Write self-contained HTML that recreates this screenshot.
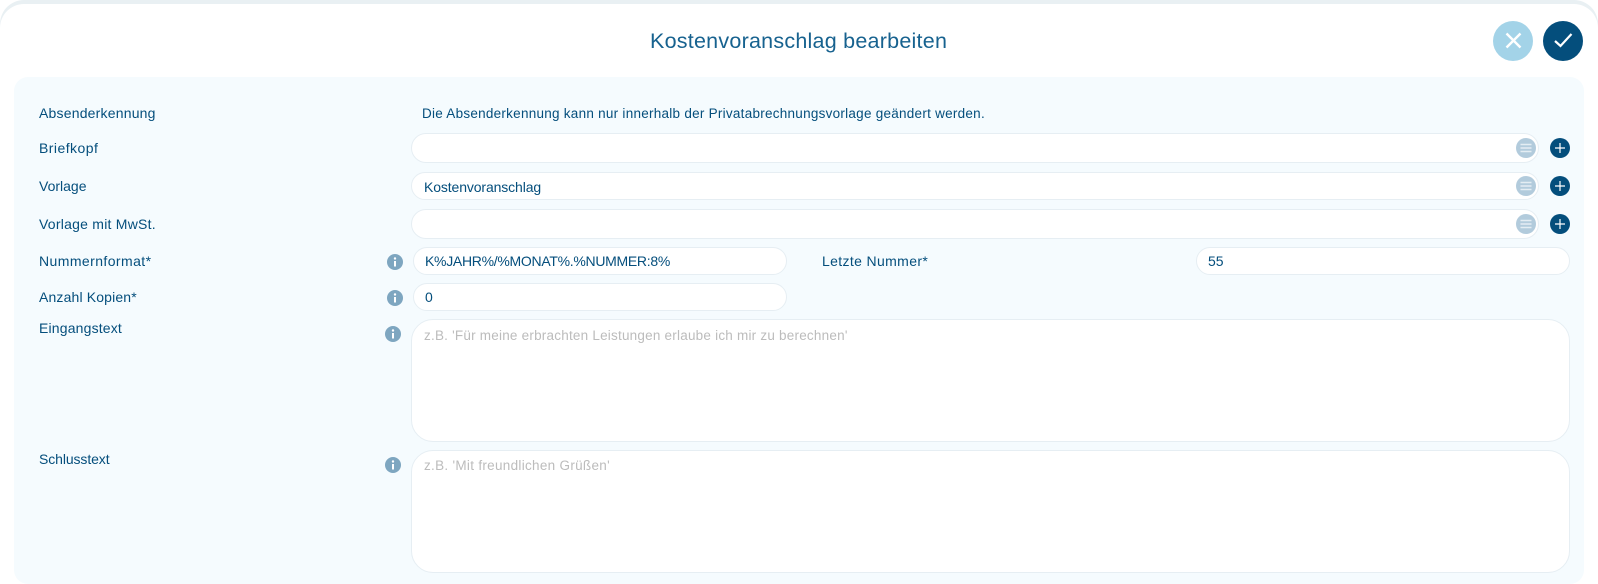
<!DOCTYPE html>
<html lang="de"><head><meta charset="utf-8"><title>Kostenvoranschlag bearbeiten</title>
<style>
html,body{margin:0;padding:0;width:1598px;height:584px;overflow:hidden;background:#fff}
body{position:relative;font-family:"Liberation Sans",sans-serif;font-size:14px;color:#044e7c}
.top{position:absolute;left:0;top:0;width:1598px;height:60px;background:#e9f0f3;border-radius:24px 24px 0 0}
.card{position:absolute;left:0;top:4px;width:1598px;height:600px;background:#fff;border-radius:24px 24px 0 0}
.panel{position:absolute;left:14px;top:77px;width:1570px;height:507px;background:#f5fbfe;border-radius:14px}
.t{position:absolute;white-space:nowrap;line-height:18px}
.title{position:absolute;left:650px;top:28px;font-size:21.5px;line-height:26px;white-space:nowrap;color:#17628f}
.in{position:absolute;box-sizing:border-box;background:#fff;border:1px solid #e6eef3;border-radius:15px}
.ta{border-radius:22px}
.ph{color:#bcbcbc}
svg{position:absolute;display:block}
</style></head><body>
<div class="top"></div>
<div class="card"></div>
<div class="panel"></div>
<div class="title" style="letter-spacing:.24px">Kostenvoranschlag bearbeiten</div>

<svg style="left:1493px;top:21px" width="40" height="40" viewBox="0 0 40 40"><circle cx="20" cy="20" r="20" fill="#a3d3e8"/><path d="M13.500 12.500L27.500 26.500M27.500 12.500L13.500 26.500" stroke="#fff" stroke-width="2.400" fill="none"/></svg>
<svg style="left:1543px;top:21px" width="40" height="40" viewBox="0 0 40 40"><circle cx="20" cy="20" r="20" fill="#044e7c"/><path d="M12 20L17.500 25L28.500 13" stroke="#fff" stroke-width="2.200" fill="none"/></svg>

<div class="t" style="left:39px;top:104px;letter-spacing:.2px">Absenderkennung</div>
<div class="t" style="left:422px;top:105px;font-size:13.500px;letter-spacing:.26px">Die Absenderkennung kann nur innerhalb der Privatabrechnungsvorlage geändert werden.</div>

<div class="t" style="left:39px;top:139px;letter-spacing:.45px">Briefkopf</div>
<div class="in" style="left:411px;top:133px;width:1128px;height:30px"></div>
<svg style="left:1516px;top:138px" width="20" height="20" viewBox="0 0 20 20"><circle cx="10" cy="10" r="10" fill="#b2cbdc"/><path d="M4.500 6.500H15.500M4.500 10H15.500M4.500 13.500H15.500" stroke="#e4edf3" stroke-width="1.600"/></svg>
<svg style="left:1550px;top:138px" width="20" height="20" viewBox="0 0 20 20"><circle cx="10" cy="10" r="10" fill="#044e7c"/><path d="M5 10H15M10 5V15" stroke="#fff" stroke-width="1.200"/></svg>

<div class="t" style="left:39px;top:177px">Vorlage</div>
<div class="in" style="left:411px;top:172px;width:1128px;height:28px"></div>
<div class="t" style="left:424px;top:178px;letter-spacing:-.12px">Kostenvoranschlag</div>
<svg style="left:1516px;top:176px" width="20" height="20" viewBox="0 0 20 20"><circle cx="10" cy="10" r="10" fill="#b2cbdc"/><path d="M4.500 6.500H15.500M4.500 10H15.500M4.500 13.500H15.500" stroke="#e4edf3" stroke-width="1.600"/></svg>
<svg style="left:1550px;top:176px" width="20" height="20" viewBox="0 0 20 20"><circle cx="10" cy="10" r="10" fill="#044e7c"/><path d="M5 10H15M10 5V15" stroke="#fff" stroke-width="1.200"/></svg>

<div class="t" style="left:39px;top:215px;letter-spacing:.24px">Vorlage mit MwSt.</div>
<div class="in" style="left:411px;top:209px;width:1128px;height:30px"></div>
<svg style="left:1516px;top:214px" width="20" height="20" viewBox="0 0 20 20"><circle cx="10" cy="10" r="10" fill="#b2cbdc"/><path d="M4.500 6.500H15.500M4.500 10H15.500M4.500 13.500H15.500" stroke="#e4edf3" stroke-width="1.600"/></svg>
<svg style="left:1550px;top:214px" width="20" height="20" viewBox="0 0 20 20"><circle cx="10" cy="10" r="10" fill="#044e7c"/><path d="M5 10H15M10 5V15" stroke="#fff" stroke-width="1.200"/></svg>

<div class="t" style="left:39px;top:252px;letter-spacing:.42px">Nummernformat*</div>
<svg style="left:387px;top:254px" width="16" height="16" viewBox="0 0 16 16"><circle cx="8" cy="8" r="8" fill="#7ea6c0"/><path d="M8 7V12.500" stroke="#fff" stroke-width="2"/><circle cx="8" cy="4.500" r="1.200" fill="#fff"/></svg>
<div class="in" style="left:413px;top:247px;width:374px;height:28px"></div>
<div class="t" style="left:425px;top:252px;letter-spacing:-.29px">K%JAHR%/%MONAT%.%NUMMER:8%</div>
<div class="t" style="left:822px;top:252px;letter-spacing:.36px">Letzte Nummer*</div>
<div class="in" style="left:1196px;top:247px;width:374px;height:28px"></div>
<div class="t" style="left:1208px;top:252px">55</div>

<div class="t" style="left:39px;top:288px;letter-spacing:.15px">Anzahl Kopien*</div>
<svg style="left:387px;top:290px" width="16" height="16" viewBox="0 0 16 16"><circle cx="8" cy="8" r="8" fill="#7ea6c0"/><path d="M8 7V12.500" stroke="#fff" stroke-width="2"/><circle cx="8" cy="4.500" r="1.200" fill="#fff"/></svg>
<div class="in" style="left:413px;top:283px;width:374px;height:28px"></div>
<div class="t" style="left:425px;top:288px">0</div>

<div class="t" style="left:39px;top:319px;letter-spacing:.17px">Eingangstext</div>
<svg style="left:385px;top:326px" width="16" height="16" viewBox="0 0 16 16"><circle cx="8" cy="8" r="8" fill="#7ea6c0"/><path d="M8 7V12.500" stroke="#fff" stroke-width="2"/><circle cx="8" cy="4.500" r="1.200" fill="#fff"/></svg>
<div class="in ta" style="left:411px;top:319px;width:1159px;height:123px"></div>
<div class="t ph" style="left:424px;top:327px;font-size:13.500px;letter-spacing:.22px">z.B. 'Für meine erbrachten Leistungen erlaube ich mir zu berechnen'</div>

<div class="t" style="left:39px;top:450px;letter-spacing:-.1px">Schlusstext</div>
<svg style="left:385px;top:457px" width="16" height="16" viewBox="0 0 16 16"><circle cx="8" cy="8" r="8" fill="#7ea6c0"/><path d="M8 7V12.500" stroke="#fff" stroke-width="2"/><circle cx="8" cy="4.500" r="1.200" fill="#fff"/></svg>
<div class="in ta" style="left:411px;top:450px;width:1159px;height:123px"></div>
<div class="t ph" style="left:424px;top:457px;font-size:13.500px;letter-spacing:.3px">z.B. 'Mit freundlichen Grüßen'</div>
</body></html>
